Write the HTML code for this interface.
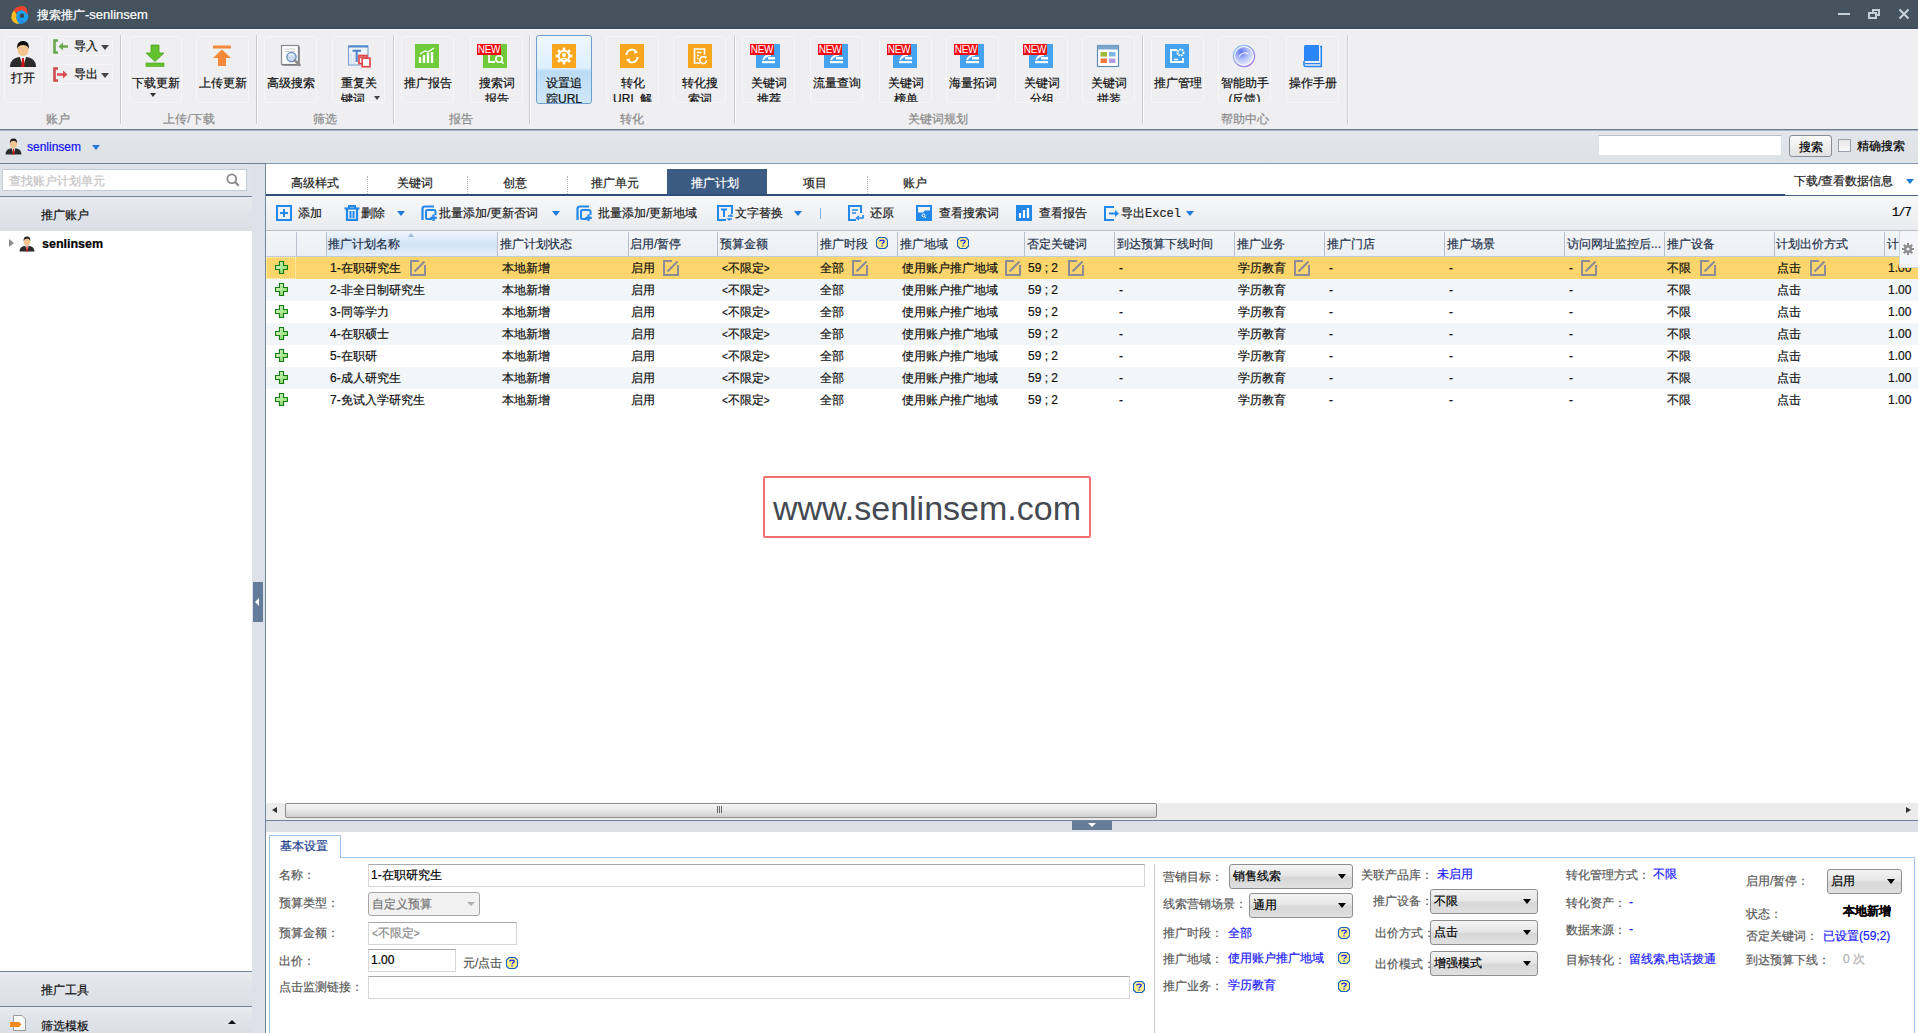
<!DOCTYPE html>
<html><head><meta charset="utf-8">
<style>
*{margin:0;padding:0;box-sizing:border-box}
html,body{width:1918px;height:1033px;overflow:hidden}
body{position:relative;font-family:"Liberation Sans",sans-serif;font-size:12px;color:#000;background:#fff;-webkit-text-stroke-width:0.2px}
.a{position:absolute}
.t{position:absolute;white-space:nowrap;line-height:14px}
/* title */
#title{left:0;top:0;width:1918px;height:29px;background:linear-gradient(#45535f 0,#45535f 27px,#404e5a 27px)}
/* ribbon */
#ribbon{left:0;top:29px;width:1918px;height:100px;background:#efeff1;border-top:1px solid #f5f8fc}
.rb{position:absolute;top:36px;height:67px;width:53px;border:1px solid #f6f6f8;border-radius:3px;text-align:center;overflow:hidden}
.rb .ic{position:absolute;left:14px;top:7px;width:24px;height:24px}
.rb .tx{position:absolute;left:-4px;right:-4px;top:38px;line-height:16px;font-size:12px;color:#111;white-space:normal}
.sep{position:absolute;top:35px;width:2px;height:89px;border-left:1px solid #c9ccd1;border-right:1px solid #fafafa}
.gl{position:absolute;top:112px;height:15px;line-height:15px;color:#8a8a8a;text-align:center;white-space:nowrap}
.new{position:absolute;left:-6px;top:7px;width:24px;height:11px;background:#f20a10;color:#fff;font-size:10px;line-height:11px;text-align:center;font-weight:normal;letter-spacing:-0.3px;overflow:hidden;-webkit-text-stroke-width:0}
/* account bar */
#acct{left:0;top:129px;width:1918px;height:35px;background:linear-gradient(#a9b6c6 0,#a9b6c6 1px,#e3e6ea 1px,#dde2e7 32px,#d8e6f3 33px);border-top:1px solid #6c7d91;border-bottom:1px solid #707f91}
/* left panel */
#lp{left:0;top:164px;width:252px;height:869px;background:#dee3ea}
#split{left:252px;top:164px;width:13px;height:869px;background:#dde2ea}
#vline{left:265px;top:164px;width:1px;height:869px;background:#72869c}
.lhdr{position:absolute;left:0;width:252px;background:linear-gradient(#e7eaef,#d9dee5);}
/* main */
#tabs{left:266px;top:164px;width:1652px;height:30px;background:#fff}
.tab{position:absolute;top:169px;height:25px;width:100px;text-align:center;line-height:29px;color:#222}
.dsep{position:absolute;top:12px;height:18px;width:1px;border-left:1px dotted #b8b8b8}
#toolbar{left:266px;top:196px;width:1652px;height:35px;background:linear-gradient(#f7f8fa,#e9ebee);border-bottom:1px solid #bcc1c8}
.tb{position:absolute;top:9px;height:16px;line-height:16px;white-space:nowrap;color:#222}
.dd{position:absolute;width:0;height:0;border-left:4px solid transparent;border-right:4px solid transparent;border-top:5px solid #1e7ad8}
#ghdr{left:266px;top:231px;width:1652px;height:26px;background:linear-gradient(#f3f5f8,#eceff4);border-bottom:1px solid #c2cad5}
.ghx{position:absolute;top:0;height:25px;line-height:25px;padding-left:3px;color:#2a3e5e;white-space:nowrap;border-left:1px solid #c9d0da}
.row{position:absolute;left:266px;width:1652px;height:22px}
.c{position:absolute;top:0;line-height:22px;white-space:nowrap;color:#111}
.ed{position:absolute;top:3px;width:16px;height:16px}
.plus{position:absolute;left:9px;top:4px;width:13px;height:13px}
.q{position:absolute;width:12px;height:12px}
/* details */
.lbl{position:absolute;color:#5a5a5a;white-space:nowrap;line-height:14px}
.val{position:absolute;color:#1a1aff;white-space:nowrap;line-height:14px}
.inp{position:absolute;background:#fff;border:1px solid #d6d6d6;border-top-color:#a9a9a9}
.sel{position:absolute;border:1px solid #8e8e8e;border-radius:3px;background:linear-gradient(#f4f4f4 0%,#e7e7e7 45%,#d7d7d7 55%,#e0e0e0 100%)}
.sel span{position:absolute;left:3px;top:0;line-height:22px;color:#000}
.sel i{position:absolute;right:6px;top:9px;width:0;height:0;border-left:4px solid transparent;border-right:4px solid transparent;border-top:5px solid #000}

.rb.act{top:35px;height:69px;border:1px solid #6c9dd3;background:linear-gradient(#eef7fe 0%,#ddeffc 48%,#bcdcf5 52%,#cfe7fa 100%)}

.rb.act .tx{top:39px}
.rb.act .ic{top:8px}
</style></head><body>
<!-- TITLE BAR -->
<div id="title" class="a">
  <svg class="a" style="left:10px;top:5px" width="19" height="19" viewBox="0 0 18 18">
    <path d="M6 9.5 C6 6 9 4.5 12 4.8 C15 5.2 17.5 7.5 17.3 11 C17 15 14 17.8 10 17.8 C7.5 17.8 6 16 6 13 Z" fill="#1aa3f5"/>
    <path d="M8.5 12.5 C8.5 14.5 10.5 16 13 15.5" stroke="#2f7fe6" stroke-width="1.5" fill="none"/>
    <circle cx="11.3" cy="10.2" r="2.1" fill="#3a4650"/>
    <path d="M2.5 8.5 C3 3.5 7.5 0.8 11.5 1 C15 1.2 17.3 4 16.3 9.5 C15.3 6.5 12.5 4.6 9.5 5.2 C7 5.8 5.3 7.5 4.6 10 Z" fill="#f7432a"/>
    <path d="M3.8 5.2 C0.8 8.5 0.6 13 2.8 15.6 C4.3 17.3 6.8 18 9 17.8 C6.5 16 5.3 12.5 6.3 9 Z" fill="#fdbe22"/>
  </svg>
  <div class="t" style="left:37px;top:7px;color:#fff;font-size:13px;line-height:15px"><span style="font-size:12px">搜索推广</span>-senlinsem</div>
  <div class="a" style="left:1838px;top:13px;width:12px;height:2px;background:#c6cfd6"></div>
  <div class="a" style="left:1872px;top:9px;width:8px;height:7px;border:2px solid #c6cfd6;border-left-width:2px"></div>
  <div class="a" style="left:1868px;top:12px;width:9px;height:7px;border:2px solid #c6cfd6;background:#45535f"></div>
  <svg class="a" style="left:1898px;top:8px" width="12" height="12" viewBox="0 0 12 12"><path d="M1.5 1.5L10.5 10.5M10.5 1.5L1.5 10.5" stroke="#c6cfd6" stroke-width="2.2"/></svg>
</div>

<div id="ribbon" class="a"></div>
<div class="rb" style="left:4px;width:38px"><div class="a" style="left:4px;top:3px"><svg width="28" height="28" viewBox="0 0 28 28">
<path d="M1 27 C1 20 6 17.5 11 17 L17 17 C22 17.5 27 20 27 27 Z" fill="#2b2b2b"/>
<path d="M11 17 L14 27 L17 17 Z" fill="#fff"/>
<path d="M13 18 L15 18 L15.6 27 L12.4 27 Z" fill="#d4141a"/>
<ellipse cx="14" cy="9.5" rx="5.6" ry="6.8" fill="#f3c48f"/>
<path d="M8.2 9 C7.5 3 10.5 1 14 1 C17.5 1 20.5 3 19.8 9 C19 6 17 5 14 5 C11 5 9 6 8.2 9 Z" fill="#111"/>
</svg></div><div class="tx" style="top:33px;left:0;right:0">打开</div></div>
<div class="rb" style="left:48px;top:36px;width:65px;height:20px"><div class="a" style="left:4px;top:2px"><svg width="16" height="15" viewBox="0 0 16 15"><path d="M5 1.5 H1.5 V13.5 H5" stroke="#6aa84f" stroke-width="2.6" fill="none"/><path d="M15 7.5 H8" stroke="#6aa84f" stroke-width="2.4"/><path d="M10 3.5 L5.5 7.5 L10 11.5 Z" fill="#6aa84f"/></svg></div><div class="t" style="left:25px;top:2px;color:#111">导入</div><div class="dd" style="left:52px;top:8px;border-top-color:#444"></div></div>
<div class="rb" style="left:48px;top:64px;width:65px;height:20px"><div class="a" style="left:4px;top:2px"><svg width="16" height="15" viewBox="0 0 16 15"><path d="M5 1.5 H1.5 V13.5 H5" stroke="#cc4a4a" stroke-width="2.6" fill="none"/><path d="M4 7.5 H11" stroke="#d94a55" stroke-width="2.4"/><path d="M10 3.5 L14.5 7.5 L10 11.5 Z" fill="#d94a55"/></svg></div><div class="t" style="left:25px;top:2px;color:#111">导出</div><div class="dd" style="left:52px;top:8px;border-top-color:#444"></div></div>
<div class="rb" style="left:129px;width:53px"><div class="ic" style="left:13px"><svg width="24" height="24" viewBox="0 0 24 24"><path d="M8 1 H16 V9 H21 L12 17.5 L3 9 H8 Z" fill="#62c22e" stroke="#4fa322" stroke-width="0.8"/><rect x="3" y="19" width="18" height="3.5" fill="#62c22e" stroke="#4fa322" stroke-width="0.6"/></svg></div><div class="tx">下载更新</div></div>
<div class="a" style="left:150px;top:93px;width:0;height:0;border-left:3.5px solid transparent;border-right:3.5px solid transparent;border-top:4px solid #333"></div>
<div class="rb" style="left:196px;width:53px"><div class="ic" style="left:13px"><svg width="24" height="24" viewBox="0 0 24 24"><rect x="3" y="1.5" width="18" height="3" fill="#f7893a"/><path d="M8 22 H16 V14 H21 L12 5.5 L3 14 H8 Z" fill="#f7893a"/></svg></div><div class="tx">上传更新</div></div>
<div class="rb" style="left:264px;width:53px"><div class="ic" style="left:12px"><svg width="26" height="24" viewBox="0 0 26 24"><rect x="4.5" y="1.5" width="17" height="19" fill="#fbfbfb" stroke="#8a8a8a" stroke-width="1.2"/><path d="M5.5 21.2 H22.2 V2.5" stroke="#555" stroke-width="0.8" fill="none"/><path d="M8 5 H18 M8 7.5 H18" stroke="#d0d0d0" stroke-width="1"/><circle cx="14.5" cy="13" r="4.6" fill="#c9dcf2" stroke="#6d8fb8" stroke-width="1.4"/><path d="M11.8 11.5 C12.8 10 15 10 16 11" stroke="#fff" stroke-width="1.1" fill="none"/><path d="M17.8 16.3 L22.5 21" stroke="#8a8a8a" stroke-width="2.6" stroke-linecap="round"/></svg></div><div class="tx">高级搜索</div></div>
<div class="rb" style="left:332px;width:53px"><div class="ic" style="left:12px"><svg width="26" height="24" viewBox="0 0 26 24"><rect x="3.5" y="2" width="19.5" height="19" fill="#eef3fa" stroke="#7aa0cf" stroke-width="1.1"/><rect x="3.5" y="1.5" width="19.5" height="2" fill="#4f87cf"/><path d="M7.5 6.8 H16 M11.7 6.8 V18" stroke="#4a7fc8" stroke-width="2"/><path d="M6 9 V20 M9 9 V20" stroke="#c9d8ee" stroke-width="1"/><rect x="14" y="11.5" width="8" height="8" fill="#fff" stroke="#e04848" stroke-width="1.7"/><rect x="17.2" y="14.2" width="7.8" height="8.5" fill="#fff" stroke="#e04848" stroke-width="1.7"/><rect x="14.8" y="12.2" width="6.4" height="2" fill="#e85a5a"/></svg></div><div class="tx">重复关<br>键词&nbsp;&nbsp;&nbsp;</div></div>
<div class="a" style="left:374px;top:96px;width:0;height:0;border-left:3.5px solid transparent;border-right:3.5px solid transparent;border-top:4px solid #444"></div>
<div class="rb" style="left:401px;width:53px"><div class="ic" style="left:13px"><svg width="24" height="24" viewBox="0 0 24 24"><rect width="24" height="24" fill="#6fcb3a"/><path d="M5 19 V13 M9 19 V11 M13 19 V9 M17 19 V8" stroke="#fff" stroke-width="2.4"/><path d="M5 10 L10 7 L13 8 L19 4" stroke="#fff" stroke-width="1.3" fill="none"/></svg></div><div class="tx">推广报告</div></div>
<div class="rb" style="left:470px;width:53px"><div class="ic" style="left:12px"><svg width="24" height="24" viewBox="0 0 24 24"><rect width="24" height="24" fill="#6fcb3a"/><path d="M6 11 V18 H12" stroke="#fff" stroke-width="1.8" fill="none"/><circle cx="16" cy="15" r="3.2" stroke="#fff" stroke-width="1.6" fill="none"/><path d="M18 17 L20.5 19.5" stroke="#fff" stroke-width="1.6"/></svg></div><div class="new" style="left:6px">NEW</div><div class="tx">搜索词<br>报告</div></div>
<div class="rb act" style="left:536px;width:56px"><div class="ic" style="left:15px"><svg width="24" height="24" viewBox="0 0 24 24"><rect width="24" height="24" fill="#f9a61f"/><g fill="#fff"><rect x="10.7" y="3.6" width="2.6" height="3.5" transform="rotate(0 12 12)"/><rect x="10.7" y="3.6" width="2.6" height="3.5" transform="rotate(45 12 12)"/><rect x="10.7" y="3.6" width="2.6" height="3.5" transform="rotate(90 12 12)"/><rect x="10.7" y="3.6" width="2.6" height="3.5" transform="rotate(135 12 12)"/><rect x="10.7" y="3.6" width="2.6" height="3.5" transform="rotate(180 12 12)"/><rect x="10.7" y="3.6" width="2.6" height="3.5" transform="rotate(225 12 12)"/><rect x="10.7" y="3.6" width="2.6" height="3.5" transform="rotate(270 12 12)"/><rect x="10.7" y="3.6" width="2.6" height="3.5" transform="rotate(315 12 12)"/><circle cx="12" cy="12" r="6.2"/></g><circle cx="12" cy="12" r="4.3" fill="#f9a61f"/><circle cx="12" cy="11" r="1.9" fill="#fff"/><path d="M8.6 15.4 C9.5 13.2 14.5 13.2 15.4 15.4 Z" fill="#fff"/></svg></div><div class="tx">设置追<br>踪URL</div></div>
<div class="rb" style="left:606px;width:53px"><div class="ic" style="left:13px"><svg width="24" height="24" viewBox="0 0 24 24"><rect width="24" height="24" fill="#f9a61f"/><path d="M6.5 11 A5.5 5.5 0 0 1 16.5 8" stroke="#fff" stroke-width="2" fill="none"/><path d="M17.5 13 A5.5 5.5 0 0 1 7.5 16" stroke="#fff" stroke-width="2" fill="none"/><path d="M14.5 5.5 L18 8.5 L14 9.5 Z" fill="#fff"/><path d="M9.5 18.5 L6 15.5 L10 14.5 Z" fill="#fff"/></svg></div><div class="tx">转化<br>URL 解</div></div>
<div class="rb" style="left:673px;width:53px"><div class="ic" style="left:14px"><svg width="24" height="24" viewBox="0 0 24 24"><rect width="24" height="24" fill="#f9a61f"/><path d="M12 19 H6.5 V5 H16.5 V10.5" stroke="#fff" stroke-width="1.6" fill="none"/><path d="M9 8.5 H13.5 M9 11.5 H11 M9 14.5 H10.5" stroke="#fff" stroke-width="1.4"/><path d="M18.6 16.2 A3.4 3.4 0 1 1 17.2 13.4" stroke="#fff" stroke-width="1.6" fill="none"/><path d="M16 12 L19 12.6 L17.6 15 Z" fill="#fff"/></svg></div><div class="tx">转化搜<br>索词</div></div>
<div class="rb" style="left:742px;width:53px"><div class="ic" style="left:13px"><svg width="24" height="24" viewBox="0 0 24 24"><rect width="24" height="24" fill="#45a3ef"/><path d="M7 16 C9 12 12 11 15 11" stroke="#fff" stroke-width="1.8" fill="none"/><rect x="12" y="13" width="7" height="2.5" fill="#fff"/><rect x="6" y="17" width="13" height="2.2" fill="#fff"/></svg></div><div class="new" style="left:7px">NEW</div><div class="tx">关键词<br>推荐</div></div>
<div class="rb" style="left:810px;width:53px"><div class="ic" style="left:13px"><svg width="24" height="24" viewBox="0 0 24 24"><rect width="24" height="24" fill="#45a3ef"/><path d="M7 16 C9 12 12 11 15 11" stroke="#fff" stroke-width="1.8" fill="none"/><rect x="12" y="13" width="7" height="2.5" fill="#fff"/><rect x="6" y="17" width="13" height="2.2" fill="#fff"/></svg></div><div class="new" style="left:7px">NEW</div><div class="tx">流量查询</div></div>
<div class="rb" style="left:879px;width:53px"><div class="ic" style="left:13px"><svg width="24" height="24" viewBox="0 0 24 24"><rect width="24" height="24" fill="#45a3ef"/><path d="M7 16 C9 12 12 11 15 11" stroke="#fff" stroke-width="1.8" fill="none"/><rect x="12" y="13" width="7" height="2.5" fill="#fff"/><rect x="6" y="17" width="13" height="2.2" fill="#fff"/></svg></div><div class="new" style="left:7px">NEW</div><div class="tx">关键词<br>榜单</div></div>
<div class="rb" style="left:946px;width:53px"><div class="ic" style="left:13px"><svg width="24" height="24" viewBox="0 0 24 24"><rect width="24" height="24" fill="#45a3ef"/><path d="M7 16 C9 12 12 11 15 11" stroke="#fff" stroke-width="1.8" fill="none"/><rect x="12" y="13" width="7" height="2.5" fill="#fff"/><rect x="6" y="17" width="13" height="2.2" fill="#fff"/></svg></div><div class="new" style="left:7px">NEW</div><div class="tx">海量拓词</div></div>
<div class="rb" style="left:1015px;width:53px"><div class="ic" style="left:13px"><svg width="24" height="24" viewBox="0 0 24 24"><rect width="24" height="24" fill="#45a3ef"/><path d="M7 16 C9 12 12 11 15 11" stroke="#fff" stroke-width="1.8" fill="none"/><rect x="12" y="13" width="7" height="2.5" fill="#fff"/><rect x="6" y="17" width="13" height="2.2" fill="#fff"/></svg></div><div class="new" style="left:7px">NEW</div><div class="tx">关键词<br>分组</div></div>
<div class="rb" style="left:1082px;width:53px"><div class="ic" style="left:13px"><svg width="24" height="24" viewBox="0 0 24 24"><rect x="1.5" y="1.5" width="21" height="21" fill="#fff" stroke="#5f8db0" stroke-width="1.2"/><rect x="1.5" y="1.5" width="21" height="4" fill="#7aa7cf"/><rect x="4.5" y="8" width="6.5" height="4.5" fill="#9ebb37"/><rect x="13" y="8" width="6.5" height="4.5" fill="#7fb6e6"/><rect x="4.5" y="14.5" width="6.5" height="4.5" fill="#f0783a"/><rect x="13" y="14.5" width="6.5" height="4.5" fill="#b49be0"/></svg></div><div class="tx">关键词<br>拼装</div></div>
<div class="rb" style="left:1151px;width:53px"><div class="ic" style="left:13px"><svg width="24" height="24" viewBox="0 0 24 24"><rect width="24" height="24" fill="#45a3ef"/><path d="M12 6 H6 V18 H18 V14" stroke="#fff" stroke-width="1.8" fill="none"/><circle cx="15.5" cy="8.5" r="3" stroke="#fff" stroke-width="2" fill="none" stroke-dasharray="1.6 0.9"/><path d="M9 15.5 H13" stroke="#fff" stroke-width="1.3"/></svg></div><div class="tx">推广管理</div></div>
<div class="rb" style="left:1218px;width:53px"><div class="ic" style="left:13px"><svg width="24" height="24" viewBox="0 0 24 24"><defs><radialGradient id="aig" cx="0.35" cy="0.3" r="0.75"><stop offset="0" stop-color="#5a6ef0"/><stop offset="0.45" stop-color="#a9b8f6"/><stop offset="1" stop-color="#e9eefc"/></radialGradient><linearGradient id="air" x1="0" y1="0" x2="1" y2="1"><stop offset="0" stop-color="#8fd0f5"/><stop offset="1" stop-color="#a46cf0"/></linearGradient></defs><circle cx="12" cy="12" r="10.6" fill="#fff" stroke="url(#air)" stroke-width="1.3"/><circle cx="12" cy="12" r="9" fill="url(#aig)"/><path d="M7 12.5 C9 9 13 8 16.5 10" stroke="#fff" stroke-width="1.2" fill="none" opacity="0.8"/></svg></div><div class="tx">智能助手<br>(反馈)</div></div>
<div class="rb" style="left:1286px;width:53px"><div class="ic" style="left:13px"><svg width="24" height="24" viewBox="0 0 24 24"><path d="M4 2.5 Q4 1 5.5 1 H19 V17 H4 Z" fill="#2a85f7"/><path d="M20 2.5 H21.3 V22.5 H5.5 Q4 22.5 4 21 V17" stroke="#2a85f7" stroke-width="1.6" fill="none"/><path d="M5 19.6 H20" stroke="#2a85f7" stroke-width="1.4"/></svg></div><div class="tx">操作手册</div></div>
<div class="sep" style="left:120px"></div>
<div class="sep" style="left:256px"></div>
<div class="sep" style="left:393px"></div>
<div class="sep" style="left:529px"></div>
<div class="sep" style="left:734px"></div>
<div class="sep" style="left:1142px"></div>
<div class="sep" style="left:1347px"></div>
<div class="gl" style="left:8px;width:100px">账户</div>
<div class="gl" style="left:139px;width:100px">上传/下载</div>
<div class="gl" style="left:275px;width:100px">筛选</div>
<div class="gl" style="left:411px;width:100px">报告</div>
<div class="gl" style="left:582px;width:100px">转化</div>
<div class="gl" style="left:888px;width:100px">关键词规划</div>
<div class="gl" style="left:1195px;width:100px">帮助中心</div>
<div id="acct" class="a"></div>
<div class="a" style="left:5px;top:138px"><svg width="17" height="17" viewBox="0 0 28 28">
<path d="M1 27 C1 20 6 17.5 11 17 L17 17 C22 17.5 27 20 27 27 Z" fill="#2b2b2b"/>
<path d="M11 17 L14 27 L17 17 Z" fill="#fff"/>
<path d="M13 18 L15 18 L15.6 27 L12.4 27 Z" fill="#d4141a"/>
<ellipse cx="14" cy="9.5" rx="5.8" ry="7" fill="#f3c48f"/>
<path d="M8.2 9 C7.5 3 10.5 1 14 1 C17.5 1 20.5 3 19.8 9 C19 6 17 5 14 5 C11 5 9 6 8.2 9 Z" fill="#222"/>
</svg></div>
<div class="t" style="left:27px;top:140px;color:#1010ff;font-size:12px">senlinsem</div>
<div class="dd" style="left:92px;top:145px;border-left-width:4px;border-right-width:4px;border-top-width:5px"></div>
<div class="a" style="left:1598px;top:135px;width:184px;height:21px;background:#fff;border:1px solid #dfe3e8;border-top-color:#b9bfc7"></div>
<div class="a" style="left:1789px;top:135px;width:43px;height:22px;border:1px solid #8a8f96;border-radius:3px;background:linear-gradient(#fbfbfb,#e2e2e2);text-align:center;line-height:22px;color:#000">搜索</div>
<div class="a" style="left:1838px;top:139px;width:13px;height:13px;border:1px solid #9aa0a8;background:linear-gradient(#e6e6e6,#fafafa)"></div>
<div class="t" style="left:1857px;top:139px;color:#000">精确搜索</div>
<div id="lp" class="a"></div><div id="split" class="a"></div><div id="vline" class="a"></div>
<div class="a" style="left:2px;top:169px;width:245px;height:22px;background:#fff;border:1px solid #c7ccd3"></div>
<div class="t" style="left:9px;top:174px;color:#c4c4c4">查找账户计划单元</div>
<svg class="a" style="left:226px;top:173px" width="14" height="14" viewBox="0 0 14 14"><circle cx="5.8" cy="5.8" r="4.4" stroke="#8a8a8a" stroke-width="1.8" fill="none"/><path d="M9 9 L12.8 12.8" stroke="#8a8a8a" stroke-width="2.2"/></svg>
<div class="a" style="left:0;top:196px;width:252px;height:1px;background:#71849a"></div>
<div class="lhdr" style="top:197px;height:34px"></div>
<div class="t" style="left:41px;top:208px;color:#111">推广账户</div>
<div class="a" style="left:0;top:231px;width:252px;height:740px;background:#fff"></div>
<div class="a" style="left:9px;top:239px;width:0;height:0;border-top:4.5px solid transparent;border-bottom:4.5px solid transparent;border-left:5px solid #8c8c8c"></div>
<div class="a" style="left:19px;top:236px"><svg width="16" height="16" viewBox="0 0 28 28">
<path d="M1 27 C1 20 6 17.5 11 17 L17 17 C22 17.5 27 20 27 27 Z" fill="#2b2b2b"/>
<path d="M11 17 L14 27 L17 17 Z" fill="#fff"/>
<path d="M13 18 L15 18 L15.6 27 L12.4 27 Z" fill="#d4141a"/>
<ellipse cx="14" cy="9.5" rx="5.8" ry="7" fill="#f3c48f"/>
<path d="M8.2 9 C7.5 3 10.5 1 14 1 C17.5 1 20.5 3 19.8 9 C19 6 17 5 14 5 C11 5 9 6 8.2 9 Z" fill="#222"/>
</svg></div>
<div class="t" style="left:42px;top:237px;font-weight:bold;font-size:12.5px;color:#000">senlinsem</div>
<div class="a" style="left:0;top:971px;width:252px;height:1px;background:#71849a"></div>
<div class="lhdr" style="top:972px;height:34px"></div>
<div class="t" style="left:41px;top:983px;color:#111">推广工具</div>
<div class="a" style="left:0;top:1006px;width:252px;height:1px;background:#71849a"></div>
<div class="lhdr" style="top:1007px;height:26px"></div>
<svg class="a" style="left:9px;top:1015px" width="18" height="16" viewBox="0 0 18 16"><path d="M4.5 0.5 H13 L16.5 4 V15.5 H4.5 Z" fill="#fafafa" stroke="#9a9a9a"/><path d="M1 7 H10 L12.5 9.5 L10 12 H1 Z" fill="#f28a1f"/></svg>
<div class="t" style="left:41px;top:1019px;color:#111">筛选模板</div>
<div class="a" style="left:228px;top:1020px;width:0;height:0;border-left:4px solid transparent;border-right:4px solid transparent;border-bottom:4px solid #111"></div>
<div class="a" style="left:253px;top:582px;width:10px;height:40px;background:#647c99"></div>
<div class="a" style="left:255px;top:598px;width:0;height:0;border-top:4px solid transparent;border-bottom:4px solid transparent;border-right:4px solid #fff"></div>
<div id="tabs" class="a"></div>
<div class="a" style="left:266px;top:163px;width:1652px;height:1px;background:#8595a8"></div>
<div class="tab" style="left:265px">高级样式</div>
<div class="tab" style="left:365px">关键词</div>
<div class="tab" style="left:465px">创意</div>
<div class="tab" style="left:565px">推广单元</div>
<div class="tab" style="left:667px;background:#3c5b82;color:#fff;padding-right:4px">推广计划</div>
<div class="tab" style="left:765px">项目</div>
<div class="tab" style="left:865px">账户</div>
<div class="dsep" style="left:367px;top:176px"></div>
<div class="dsep" style="left:467px;top:176px"></div>
<div class="dsep" style="left:567px;top:176px"></div>
<div class="dsep" style="left:867px;top:176px"></div>
<div class="t" style="left:1794px;top:174px;color:#222">下载/查看数据信息</div>
<div class="dd" style="left:1906px;top:179px"></div>
<div class="a" style="left:266px;top:194px;width:1519px;height:2px;background:#2f4d76"></div>
<div class="a" style="left:1785px;top:195px;width:133px;height:1px;background:#4a6488"></div>
<div id="toolbar" class="a"></div>
<div class="a" style="left:276px;top:205px"><svg width="16" height="16" viewBox="0 0 16 16"><rect x="1" y="1" width="14" height="14" fill="none" stroke="#2288ea" stroke-width="2"/><path d="M8 4 V12 M4 8 H12" stroke="#2288ea" stroke-width="2"/></svg></div>
<div class="t" style="left:298px;top:206px;color:#222">添加</div>
<div class="a" style="left:344px;top:205px"><svg width="16" height="16" viewBox="0 0 16 16"><path d="M0.5 3.5 H15.5" stroke="#2288ea" stroke-width="2.2"/><path d="M5 3 V1 H11 V3" stroke="#2288ea" stroke-width="2" fill="none"/><path d="M3 4 V14.8 H13 V4" stroke="#2288ea" stroke-width="2.2" fill="none"/><path d="M6.5 6 V13 M9.5 6 V13" stroke="#2288ea" stroke-width="2"/></svg></div>
<div class="t" style="left:361px;top:206px;color:#222">删除</div>
<div class="dd" style="left:397px;top:211px"></div>
<div class="a" style="left:421px;top:205px"><svg width="16" height="16" viewBox="0 0 16 16"><path d="M1.5 15 V4 Q1.5 1.5 4 1.5 H13" stroke="#2288ea" stroke-width="2.2" fill="none"/><path d="M11 14 H6.5 Q5 14 5 12.5 V6.5 Q5 5 6.5 5 H13 Q14.5 5 14.5 6.5 V10" stroke="#2288ea" stroke-width="2" fill="none"/><path d="M12.5 9.5 V16 M9.3 12.8 H15.8" stroke="#2288ea" stroke-width="2.3"/></svg></div>
<div class="t" style="left:439px;top:206px;color:#222">批量添加/更新否词</div>
<div class="dd" style="left:552px;top:211px"></div>
<div class="a" style="left:576px;top:205px"><svg width="16" height="16" viewBox="0 0 16 16"><path d="M1.5 15 V4 Q1.5 1.5 4 1.5 H13" stroke="#2288ea" stroke-width="2.2" fill="none"/><path d="M11 14 H6.5 Q5 14 5 12.5 V6.5 Q5 5 6.5 5 H13 Q14.5 5 14.5 6.5 V10" stroke="#2288ea" stroke-width="2" fill="none"/><path d="M12.5 9.5 V16 M9.3 12.8 H15.8" stroke="#2288ea" stroke-width="2.3"/></svg></div>
<div class="t" style="left:598px;top:206px;color:#222">批量添加/更新地域</div>
<div class="a" style="left:717px;top:205px"><svg width="16" height="16" viewBox="0 0 16 16"><path d="M9 15 H1 V1 H15 V9" stroke="#2288ea" stroke-width="2" fill="none"/><path d="M4 4.5 H10 M7 4.5 V12" stroke="#2288ea" stroke-width="2"/><path d="M11 11 H15 L13.5 9.5 M15 14 H11 L12.5 15.5" stroke="#2288ea" stroke-width="1.3" fill="none"/></svg></div>
<div class="t" style="left:735px;top:206px;color:#222">文字替换</div>
<div class="dd" style="left:794px;top:211px"></div>
<div class="a" style="left:848px;top:205px"><svg width="16" height="16" viewBox="0 0 16 16"><path d="M8 15 H1 V1 H13 V8" stroke="#2288ea" stroke-width="2" fill="none"/><path d="M4 5 H10 M4 8 H8" stroke="#2288ea" stroke-width="1.6"/><path d="M15 10 V13 H9" stroke="#2288ea" stroke-width="1.6" fill="none"/><path d="M11 11 L8.5 13 L11 15" stroke="#2288ea" stroke-width="1.4" fill="none"/></svg></div>
<div class="t" style="left:870px;top:206px;color:#222">还原</div>
<div class="a" style="left:916px;top:205px"><svg width="16" height="16" viewBox="0 0 16 16"><rect x="1" y="1" width="14" height="14" fill="none" stroke="#2288ea" stroke-width="2"/><path d="M2 7.5 L7 7.5 L9 5.5 H14 V14 H2 Z" fill="#2288ea"/><circle cx="7.5" cy="10.5" r="1.5" fill="none" stroke="#fff" stroke-width="1"/><path d="M8.6 11.6 L10 13" stroke="#fff" stroke-width="1"/></svg></div>
<div class="t" style="left:939px;top:206px;color:#222">查看搜索词</div>
<div class="a" style="left:1016px;top:205px"><svg width="16" height="16" viewBox="0 0 16 16"><rect width="16" height="16" fill="#2288ea"/><path d="M4 13 V8 M8 13 V5 M12 13 V3" stroke="#fff" stroke-width="2.2"/></svg></div>
<div class="t" style="left:1039px;top:206px;color:#222">查看报告</div>
<div class="a" style="left:1104px;top:205px"><svg width="16" height="16" viewBox="0 0 16 16"><path d="M10 2 H1 V15 H10" stroke="#2288ea" stroke-width="2" fill="none"/><path d="M5 8.5 H13" stroke="#2288ea" stroke-width="2"/><path d="M11 5 L15 8.5 L11 12 Z" fill="#2288ea"/></svg></div>
<div class="t" style="left:1121px;top:206px;color:#222">导出<span style="font-family:&quot;Liberation Mono&quot;,monospace;font-size:12px">Excel</span></div>
<div class="dd" style="left:1186px;top:211px"></div>
<div class="a" style="left:820px;top:208px;width:1px;height:11px;background:#7fb0e6"></div>
<div class="t" style="left:1892px;top:206px;font-family:&quot;Liberation Mono&quot;,monospace;font-size:12px;letter-spacing:-1px;color:#000">1/7</div>
<div id="ghdr" class="a"></div>
<div class="a" style="left:327px;top:232px;width:170px;height:24px;background:linear-gradient(#eef4fc,#d3e2f6 50%,#e6eefa)"></div>
<div class="a" style="left:296px;top:232px;width:1px;height:24px;background:#b9c0cc"></div>
<div class="a" style="left:326px;top:232px;width:1px;height:24px;background:#b9c0cc"></div>
<div class="a" style="left:497px;top:232px;width:1px;height:24px;background:#b9c0cc"></div>
<div class="a" style="left:628px;top:232px;width:1px;height:24px;background:#b9c0cc"></div>
<div class="a" style="left:717px;top:232px;width:1px;height:24px;background:#b9c0cc"></div>
<div class="a" style="left:817px;top:232px;width:1px;height:24px;background:#b9c0cc"></div>
<div class="a" style="left:897px;top:232px;width:1px;height:24px;background:#b9c0cc"></div>
<div class="a" style="left:1024px;top:232px;width:1px;height:24px;background:#b9c0cc"></div>
<div class="a" style="left:1114px;top:232px;width:1px;height:24px;background:#b9c0cc"></div>
<div class="a" style="left:1234px;top:232px;width:1px;height:24px;background:#b9c0cc"></div>
<div class="a" style="left:1324px;top:232px;width:1px;height:24px;background:#b9c0cc"></div>
<div class="a" style="left:1444px;top:232px;width:1px;height:24px;background:#b9c0cc"></div>
<div class="a" style="left:1564px;top:232px;width:1px;height:24px;background:#b9c0cc"></div>
<div class="a" style="left:1664px;top:232px;width:1px;height:24px;background:#b9c0cc"></div>
<div class="a" style="left:1774px;top:232px;width:1px;height:24px;background:#b9c0cc"></div>
<div class="a" style="left:1884px;top:232px;width:1px;height:24px;background:#b9c0cc"></div>
<div class="t" style="left:328px;top:237px;color:#25324a">推广计划名称</div>
<div class="t" style="left:500px;top:237px;color:#25324a">推广计划状态</div>
<div class="t" style="left:630px;top:237px;color:#25324a">启用/暂停</div>
<div class="t" style="left:720px;top:237px;color:#25324a">预算金额</div>
<div class="t" style="left:820px;top:237px;color:#25324a">推广时段</div>
<div class="t" style="left:900px;top:237px;color:#25324a">推广地域</div>
<div class="t" style="left:1027px;top:237px;color:#25324a">否定关键词</div>
<div class="t" style="left:1117px;top:237px;color:#25324a">到达预算下线时间</div>
<div class="t" style="left:1237px;top:237px;color:#25324a">推广业务</div>
<div class="t" style="left:1327px;top:237px;color:#25324a">推广门店</div>
<div class="t" style="left:1447px;top:237px;color:#25324a">推广场景</div>
<div class="t" style="left:1567px;top:237px;color:#25324a">访问网址监控后...</div>
<div class="t" style="left:1667px;top:237px;color:#25324a">推广设备</div>
<div class="t" style="left:1776px;top:237px;color:#25324a">计划出价方式</div>
<div class="t" style="left:1887px;top:237px;color:#25324a">计</div>
<div class="a" style="left:408px;top:233px;width:0;height:0;border-left:3px solid transparent;border-right:3px solid transparent;border-bottom:4px solid #a9bfdc"></div>
<div class="a" style="left:876px;top:237px"><svg width="12" height="12" viewBox="0 0 12 12"><path d="M3 0.5 H9 L11.5 3 V9 L9 11.5 H3 L0.5 9 V3 Z" fill="#f7f08a" stroke="#1560c0" stroke-width="1.1"/><path d="M3.8 4.4 C3.8 2.6 8.2 2.6 8.2 4.4 C8.2 5.6 6 5.8 6 7.3" stroke="#1a1aff" stroke-width="1.2" fill="none"/><rect x="5.4" y="8.3" width="1.3" height="1.3" fill="#1a1aff"/></svg></div>
<div class="a" style="left:957px;top:237px"><svg width="12" height="12" viewBox="0 0 12 12"><path d="M3 0.5 H9 L11.5 3 V9 L9 11.5 H3 L0.5 9 V3 Z" fill="#f7f08a" stroke="#1560c0" stroke-width="1.1"/><path d="M3.8 4.4 C3.8 2.6 8.2 2.6 8.2 4.4 C8.2 5.6 6 5.8 6 7.3" stroke="#1a1aff" stroke-width="1.2" fill="none"/><rect x="5.4" y="8.3" width="1.3" height="1.3" fill="#1a1aff"/></svg></div>
<div class="a" style="left:1899px;top:231px;width:19px;height:37px;background:#f3f5f8;border-left:1px solid #d0d6de;border-bottom:1px solid #d0d6de"></div>
<svg class="a" style="left:1902px;top:243px" width="12" height="12" viewBox="0 0 12 12"><g fill="#8f8f8f"><circle cx="6" cy="6" r="4"/><rect x="5" y="0" width="2" height="12"/><rect x="0" y="5" width="12" height="2"/><rect x="5" y="0" width="2" height="12" transform="rotate(45 6 6)"/><rect x="5" y="0" width="2" height="12" transform="rotate(-45 6 6)"/></g><circle cx="6" cy="6" r="1.6" fill="#f3f5f8"/></svg>
<div class="row" style="top:257px;background:#fcd66c">
<div class="plus"><svg width="13" height="13" viewBox="0 0 13 13"><defs><linearGradient id="pg" x1="0" y1="0" x2="1" y2="1"><stop offset="0" stop-color="#e6fbd8"/><stop offset="1" stop-color="#7fd65a"/></linearGradient></defs><path d="M4.5 0.5 H8.5 V4.5 H12.5 V8.5 H8.5 V12.5 H4.5 V8.5 H0.5 V4.5 H4.5 Z" fill="url(#pg)" stroke="#137c13" stroke-width="1.2"/></svg></div>
<div class="c" style="left:64px">1-在职研究生</div>
<div class="c" style="left:236px">本地新增</div>
<div class="c" style="left:365px">启用</div>
<div class="c" style="left:456px"><span style="font-size:10px">&lt;</span>不限定<span style="font-size:10px">&gt;</span></div>
<div class="c" style="left:554px">全部</div>
<div class="c" style="left:636px">使用账户推广地域</div>
<div class="c" style="left:762px">59 ; 2</div>
<div class="c" style="left:853px">-</div>
<div class="c" style="left:972px">学历教育</div>
<div class="c" style="left:1063px">-</div>
<div class="c" style="left:1183px">-</div>
<div class="c" style="left:1303px">-</div>
<div class="c" style="left:1401px">不限</div>
<div class="c" style="left:1511px">点击</div>
<div class="c" style="left:1622px">1.00</div>
<div class="ed" style="left:144px"><svg width="16" height="16" viewBox="0 0 16 16"><path d="M9 1 H1 V15 H15 V5" stroke="#8c8c98" stroke-width="2" fill="none"/><path d="M4.5 11.5 L14.5 1.5" stroke="#8c8c98" stroke-width="2.2"/></svg></div>
<div class="ed" style="left:397px"><svg width="16" height="16" viewBox="0 0 16 16"><path d="M9 1 H1 V15 H15 V5" stroke="#8c8c98" stroke-width="2" fill="none"/><path d="M4.5 11.5 L14.5 1.5" stroke="#8c8c98" stroke-width="2.2"/></svg></div>
<div class="ed" style="left:586px"><svg width="16" height="16" viewBox="0 0 16 16"><path d="M9 1 H1 V15 H15 V5" stroke="#8c8c98" stroke-width="2" fill="none"/><path d="M4.5 11.5 L14.5 1.5" stroke="#8c8c98" stroke-width="2.2"/></svg></div>
<div class="ed" style="left:739px"><svg width="16" height="16" viewBox="0 0 16 16"><path d="M9 1 H1 V15 H15 V5" stroke="#8c8c98" stroke-width="2" fill="none"/><path d="M4.5 11.5 L14.5 1.5" stroke="#8c8c98" stroke-width="2.2"/></svg></div>
<div class="ed" style="left:802px"><svg width="16" height="16" viewBox="0 0 16 16"><path d="M9 1 H1 V15 H15 V5" stroke="#8c8c98" stroke-width="2" fill="none"/><path d="M4.5 11.5 L14.5 1.5" stroke="#8c8c98" stroke-width="2.2"/></svg></div>
<div class="ed" style="left:1028px"><svg width="16" height="16" viewBox="0 0 16 16"><path d="M9 1 H1 V15 H15 V5" stroke="#8c8c98" stroke-width="2" fill="none"/><path d="M4.5 11.5 L14.5 1.5" stroke="#8c8c98" stroke-width="2.2"/></svg></div>
<div class="ed" style="left:1315px"><svg width="16" height="16" viewBox="0 0 16 16"><path d="M9 1 H1 V15 H15 V5" stroke="#8c8c98" stroke-width="2" fill="none"/><path d="M4.5 11.5 L14.5 1.5" stroke="#8c8c98" stroke-width="2.2"/></svg></div>
<div class="ed" style="left:1434px"><svg width="16" height="16" viewBox="0 0 16 16"><path d="M9 1 H1 V15 H15 V5" stroke="#8c8c98" stroke-width="2" fill="none"/><path d="M4.5 11.5 L14.5 1.5" stroke="#8c8c98" stroke-width="2.2"/></svg></div>
<div class="ed" style="left:1544px"><svg width="16" height="16" viewBox="0 0 16 16"><path d="M9 1 H1 V15 H15 V5" stroke="#8c8c98" stroke-width="2" fill="none"/><path d="M4.5 11.5 L14.5 1.5" stroke="#8c8c98" stroke-width="2.2"/></svg></div>
</div>
<div class="row" style="top:279px;background:#f3f6f9">
<div class="plus"><svg width="13" height="13" viewBox="0 0 13 13"><defs><linearGradient id="pg" x1="0" y1="0" x2="1" y2="1"><stop offset="0" stop-color="#e6fbd8"/><stop offset="1" stop-color="#7fd65a"/></linearGradient></defs><path d="M4.5 0.5 H8.5 V4.5 H12.5 V8.5 H8.5 V12.5 H4.5 V8.5 H0.5 V4.5 H4.5 Z" fill="url(#pg)" stroke="#137c13" stroke-width="1.2"/></svg></div>
<div class="c" style="left:64px">2-非全日制研究生</div>
<div class="c" style="left:236px">本地新增</div>
<div class="c" style="left:365px">启用</div>
<div class="c" style="left:456px"><span style="font-size:10px">&lt;</span>不限定<span style="font-size:10px">&gt;</span></div>
<div class="c" style="left:554px">全部</div>
<div class="c" style="left:636px">使用账户推广地域</div>
<div class="c" style="left:762px">59 ; 2</div>
<div class="c" style="left:853px">-</div>
<div class="c" style="left:972px">学历教育</div>
<div class="c" style="left:1063px">-</div>
<div class="c" style="left:1183px">-</div>
<div class="c" style="left:1303px">-</div>
<div class="c" style="left:1401px">不限</div>
<div class="c" style="left:1511px">点击</div>
<div class="c" style="left:1622px">1.00</div>
</div>
<div class="row" style="top:301px;background:#fff">
<div class="plus"><svg width="13" height="13" viewBox="0 0 13 13"><defs><linearGradient id="pg" x1="0" y1="0" x2="1" y2="1"><stop offset="0" stop-color="#e6fbd8"/><stop offset="1" stop-color="#7fd65a"/></linearGradient></defs><path d="M4.5 0.5 H8.5 V4.5 H12.5 V8.5 H8.5 V12.5 H4.5 V8.5 H0.5 V4.5 H4.5 Z" fill="url(#pg)" stroke="#137c13" stroke-width="1.2"/></svg></div>
<div class="c" style="left:64px">3-同等学力</div>
<div class="c" style="left:236px">本地新增</div>
<div class="c" style="left:365px">启用</div>
<div class="c" style="left:456px"><span style="font-size:10px">&lt;</span>不限定<span style="font-size:10px">&gt;</span></div>
<div class="c" style="left:554px">全部</div>
<div class="c" style="left:636px">使用账户推广地域</div>
<div class="c" style="left:762px">59 ; 2</div>
<div class="c" style="left:853px">-</div>
<div class="c" style="left:972px">学历教育</div>
<div class="c" style="left:1063px">-</div>
<div class="c" style="left:1183px">-</div>
<div class="c" style="left:1303px">-</div>
<div class="c" style="left:1401px">不限</div>
<div class="c" style="left:1511px">点击</div>
<div class="c" style="left:1622px">1.00</div>
</div>
<div class="row" style="top:323px;background:#f3f6f9">
<div class="plus"><svg width="13" height="13" viewBox="0 0 13 13"><defs><linearGradient id="pg" x1="0" y1="0" x2="1" y2="1"><stop offset="0" stop-color="#e6fbd8"/><stop offset="1" stop-color="#7fd65a"/></linearGradient></defs><path d="M4.5 0.5 H8.5 V4.5 H12.5 V8.5 H8.5 V12.5 H4.5 V8.5 H0.5 V4.5 H4.5 Z" fill="url(#pg)" stroke="#137c13" stroke-width="1.2"/></svg></div>
<div class="c" style="left:64px">4-在职硕士</div>
<div class="c" style="left:236px">本地新增</div>
<div class="c" style="left:365px">启用</div>
<div class="c" style="left:456px"><span style="font-size:10px">&lt;</span>不限定<span style="font-size:10px">&gt;</span></div>
<div class="c" style="left:554px">全部</div>
<div class="c" style="left:636px">使用账户推广地域</div>
<div class="c" style="left:762px">59 ; 2</div>
<div class="c" style="left:853px">-</div>
<div class="c" style="left:972px">学历教育</div>
<div class="c" style="left:1063px">-</div>
<div class="c" style="left:1183px">-</div>
<div class="c" style="left:1303px">-</div>
<div class="c" style="left:1401px">不限</div>
<div class="c" style="left:1511px">点击</div>
<div class="c" style="left:1622px">1.00</div>
</div>
<div class="row" style="top:345px;background:#fff">
<div class="plus"><svg width="13" height="13" viewBox="0 0 13 13"><defs><linearGradient id="pg" x1="0" y1="0" x2="1" y2="1"><stop offset="0" stop-color="#e6fbd8"/><stop offset="1" stop-color="#7fd65a"/></linearGradient></defs><path d="M4.5 0.5 H8.5 V4.5 H12.5 V8.5 H8.5 V12.5 H4.5 V8.5 H0.5 V4.5 H4.5 Z" fill="url(#pg)" stroke="#137c13" stroke-width="1.2"/></svg></div>
<div class="c" style="left:64px">5-在职研</div>
<div class="c" style="left:236px">本地新增</div>
<div class="c" style="left:365px">启用</div>
<div class="c" style="left:456px"><span style="font-size:10px">&lt;</span>不限定<span style="font-size:10px">&gt;</span></div>
<div class="c" style="left:554px">全部</div>
<div class="c" style="left:636px">使用账户推广地域</div>
<div class="c" style="left:762px">59 ; 2</div>
<div class="c" style="left:853px">-</div>
<div class="c" style="left:972px">学历教育</div>
<div class="c" style="left:1063px">-</div>
<div class="c" style="left:1183px">-</div>
<div class="c" style="left:1303px">-</div>
<div class="c" style="left:1401px">不限</div>
<div class="c" style="left:1511px">点击</div>
<div class="c" style="left:1622px">1.00</div>
</div>
<div class="row" style="top:367px;background:#f3f6f9">
<div class="plus"><svg width="13" height="13" viewBox="0 0 13 13"><defs><linearGradient id="pg" x1="0" y1="0" x2="1" y2="1"><stop offset="0" stop-color="#e6fbd8"/><stop offset="1" stop-color="#7fd65a"/></linearGradient></defs><path d="M4.5 0.5 H8.5 V4.5 H12.5 V8.5 H8.5 V12.5 H4.5 V8.5 H0.5 V4.5 H4.5 Z" fill="url(#pg)" stroke="#137c13" stroke-width="1.2"/></svg></div>
<div class="c" style="left:64px">6-成人研究生</div>
<div class="c" style="left:236px">本地新增</div>
<div class="c" style="left:365px">启用</div>
<div class="c" style="left:456px"><span style="font-size:10px">&lt;</span>不限定<span style="font-size:10px">&gt;</span></div>
<div class="c" style="left:554px">全部</div>
<div class="c" style="left:636px">使用账户推广地域</div>
<div class="c" style="left:762px">59 ; 2</div>
<div class="c" style="left:853px">-</div>
<div class="c" style="left:972px">学历教育</div>
<div class="c" style="left:1063px">-</div>
<div class="c" style="left:1183px">-</div>
<div class="c" style="left:1303px">-</div>
<div class="c" style="left:1401px">不限</div>
<div class="c" style="left:1511px">点击</div>
<div class="c" style="left:1622px">1.00</div>
</div>
<div class="row" style="top:389px;background:#fff">
<div class="plus"><svg width="13" height="13" viewBox="0 0 13 13"><defs><linearGradient id="pg" x1="0" y1="0" x2="1" y2="1"><stop offset="0" stop-color="#e6fbd8"/><stop offset="1" stop-color="#7fd65a"/></linearGradient></defs><path d="M4.5 0.5 H8.5 V4.5 H12.5 V8.5 H8.5 V12.5 H4.5 V8.5 H0.5 V4.5 H4.5 Z" fill="url(#pg)" stroke="#137c13" stroke-width="1.2"/></svg></div>
<div class="c" style="left:64px">7-免试入学研究生</div>
<div class="c" style="left:236px">本地新增</div>
<div class="c" style="left:365px">启用</div>
<div class="c" style="left:456px"><span style="font-size:10px">&lt;</span>不限定<span style="font-size:10px">&gt;</span></div>
<div class="c" style="left:554px">全部</div>
<div class="c" style="left:636px">使用账户推广地域</div>
<div class="c" style="left:762px">59 ; 2</div>
<div class="c" style="left:853px">-</div>
<div class="c" style="left:972px">学历教育</div>
<div class="c" style="left:1063px">-</div>
<div class="c" style="left:1183px">-</div>
<div class="c" style="left:1303px">-</div>
<div class="c" style="left:1401px">不限</div>
<div class="c" style="left:1511px">点击</div>
<div class="c" style="left:1622px">1.00</div>
</div>
<div class="a" style="left:266px;top:257px;width:30px;height:22px;border:1px dotted #fff8c8"></div>
<div class="a" style="left:1899px;top:257px;width:19px;height:11px;background:#f3f5f8;border-left:1px solid #d0d6de;border-bottom:1px solid #d0d6de"></div>
<div class="a" style="left:763px;top:476px;width:328px;height:62px;border:2px solid #f26f70;border-radius:2px"></div>
<div class="t" style="left:773px;top:488px;font-size:34px;line-height:40px;color:#454a52;-webkit-text-stroke-width:0">www.senlinsem.com</div>
<div class="a" style="left:266px;top:803px;width:1652px;height:17px;background:#ececec"></div>
<div class="a" style="left:272px;top:807px;width:0;height:0;border-top:3.5px solid transparent;border-bottom:3.5px solid transparent;border-right:5px solid #333"></div>
<div class="a" style="left:1906px;top:807px;width:0;height:0;border-top:3.5px solid transparent;border-bottom:3.5px solid transparent;border-left:5px solid #333"></div>
<div class="a" style="left:285px;top:803px;width:872px;height:15px;border:1px solid #8d8d8d;border-radius:2px;background:linear-gradient(#f6f6f6,#e6e6e6 50%,#cfcfcf)"></div>
<div class="a" style="left:717px;top:806px;width:1px;height:7px;background:#666"></div><div class="a" style="left:719px;top:806px;width:1px;height:7px;background:#666"></div><div class="a" style="left:721px;top:806px;width:1px;height:7px;background:#666"></div>
<div class="a" style="left:266px;top:820px;width:1652px;height:1px;background:#6f8399"></div>
<div class="a" style="left:266px;top:821px;width:1652px;height:11px;background:#dce1e8"></div>
<div class="a" style="left:1072px;top:821px;width:40px;height:9px;background:#657c98"></div>
<div class="a" style="left:1088px;top:823px;width:0;height:0;border-left:4px solid transparent;border-right:4px solid transparent;border-top:4px solid #fff"></div>
<div class="a" style="left:269px;top:835px;width:72px;height:23px;border:1px solid #9fc4ea;border-bottom:none;background:#fff"></div>
<div class="t" style="left:280px;top:839px;color:#1d3f8c">基本设置</div>
<div class="a" style="left:341px;top:857px;width:1574px;height:1px;background:#9fc4ea"></div>
<div class="a" style="left:269px;top:858px;width:1px;height:175px;background:#9fc4ea"></div>
<div class="a" style="left:1914px;top:857px;width:1px;height:176px;background:#9fc4ea"></div>
<div class="lbl" style="left:279px;top:868px;">名称：</div>
<div class="inp" style="left:368px;top:864px;width:777px;height:23px"></div>
<div class="t" style="left:371px;top:868px;color:#000">1-在职研究生</div>
<div class="lbl" style="left:279px;top:896px;">预算类型：</div>
<div class="a" style="left:368px;top:892px;width:112px;height:24px;border:1px solid #a6a6a6;border-radius:3px;background:#f2f2f2"></div>
<div class="t" style="left:372px;top:897px;color:#777">自定义预算</div>
<div class="a" style="left:467px;top:902px;width:0;height:0;border-left:4px solid transparent;border-right:4px solid transparent;border-top:4px solid #b0b0b0"></div>
<div class="lbl" style="left:279px;top:926px;">预算金额：</div>
<div class="inp" style="left:368px;top:922px;width:149px;height:23px"></div>
<div class="t" style="left:372px;top:926px;color:#8a8a8a"><span style="font-size:10px">&lt;</span>不限定<span style="font-size:10px">&gt;</span></div>
<div class="lbl" style="left:279px;top:954px;">出价：</div>
<div class="inp" style="left:368px;top:949px;width:88px;height:23px"></div>
<div class="t" style="left:371px;top:953px;color:#000">1.00</div>
<div class="t" style="left:463px;top:956px;color:#555">元/点击</div>
<div class="a" style="left:506px;top:957px"><svg width="12" height="12" viewBox="0 0 12 12"><path d="M3 0.5 H9 L11.5 3 V9 L9 11.5 H3 L0.5 9 V3 Z" fill="#f7f08a" stroke="#1560c0" stroke-width="1.1"/><path d="M3.8 4.4 C3.8 2.6 8.2 2.6 8.2 4.4 C8.2 5.6 6 5.8 6 7.3" stroke="#1a1aff" stroke-width="1.2" fill="none"/><rect x="5.4" y="8.3" width="1.3" height="1.3" fill="#1a1aff"/></svg></div>
<div class="lbl" style="left:279px;top:980px;">点击监测链接：</div>
<div class="inp" style="left:368px;top:976px;width:762px;height:23px"></div>
<div class="a" style="left:1133px;top:981px"><svg width="12" height="12" viewBox="0 0 12 12"><path d="M3 0.5 H9 L11.5 3 V9 L9 11.5 H3 L0.5 9 V3 Z" fill="#f7f08a" stroke="#1560c0" stroke-width="1.1"/><path d="M3.8 4.4 C3.8 2.6 8.2 2.6 8.2 4.4 C8.2 5.6 6 5.8 6 7.3" stroke="#1a1aff" stroke-width="1.2" fill="none"/><rect x="5.4" y="8.3" width="1.3" height="1.3" fill="#1a1aff"/></svg></div>
<div class="a" style="left:1154px;top:864px;width:1px;height:169px;background:#c8c8c8"></div>
<div class="lbl" style="left:1163px;top:870px;">营销目标：</div>
<div class="sel" style="left:1229px;top:864px;width:124px;height:25px"><span style="line-height:23px">销售线索</span><i style="top:9px"></i></div>
<div class="lbl" style="left:1163px;top:897px;">线索营销场景：</div>
<div class="sel" style="left:1249px;top:893px;width:104px;height:25px"><span style="line-height:23px">通用</span><i style="top:9px"></i></div>
<div class="lbl" style="left:1163px;top:926px;">推广时段：</div>
<div class="val" style="left:1228px;top:926px;">全部</div>
<div class="lbl" style="left:1163px;top:952px;">推广地域：</div>
<div class="val" style="left:1228px;top:951px;">使用账户推广地域</div>
<div class="lbl" style="left:1163px;top:979px;">推广业务：</div>
<div class="val" style="left:1228px;top:978px;">学历教育</div>
<div class="a" style="left:1338px;top:927px"><svg width="12" height="12" viewBox="0 0 12 12"><path d="M3 0.5 H9 L11.5 3 V9 L9 11.5 H3 L0.5 9 V3 Z" fill="#f7f08a" stroke="#1560c0" stroke-width="1.1"/><path d="M3.8 4.4 C3.8 2.6 8.2 2.6 8.2 4.4 C8.2 5.6 6 5.8 6 7.3" stroke="#1a1aff" stroke-width="1.2" fill="none"/><rect x="5.4" y="8.3" width="1.3" height="1.3" fill="#1a1aff"/></svg></div>
<div class="a" style="left:1338px;top:952px"><svg width="12" height="12" viewBox="0 0 12 12"><path d="M3 0.5 H9 L11.5 3 V9 L9 11.5 H3 L0.5 9 V3 Z" fill="#f7f08a" stroke="#1560c0" stroke-width="1.1"/><path d="M3.8 4.4 C3.8 2.6 8.2 2.6 8.2 4.4 C8.2 5.6 6 5.8 6 7.3" stroke="#1a1aff" stroke-width="1.2" fill="none"/><rect x="5.4" y="8.3" width="1.3" height="1.3" fill="#1a1aff"/></svg></div>
<div class="a" style="left:1338px;top:980px"><svg width="12" height="12" viewBox="0 0 12 12"><path d="M3 0.5 H9 L11.5 3 V9 L9 11.5 H3 L0.5 9 V3 Z" fill="#f7f08a" stroke="#1560c0" stroke-width="1.1"/><path d="M3.8 4.4 C3.8 2.6 8.2 2.6 8.2 4.4 C8.2 5.6 6 5.8 6 7.3" stroke="#1a1aff" stroke-width="1.2" fill="none"/><rect x="5.4" y="8.3" width="1.3" height="1.3" fill="#1a1aff"/></svg></div>
<div class="lbl" style="left:1361px;top:868px;">关联产品库：</div>
<div class="val" style="left:1437px;top:867px;">未启用</div>
<div class="lbl" style="left:1373px;top:894px;">推广设备：</div>
<div class="sel" style="left:1430px;top:889px;width:108px;height:25px"><span style="line-height:23px">不限</span><i style="top:9px"></i></div>
<div class="lbl" style="left:1375px;top:926px;">出价方式：</div>
<div class="sel" style="left:1430px;top:920px;width:108px;height:25px"><span style="line-height:23px">点击</span><i style="top:9px"></i></div>
<div class="lbl" style="left:1375px;top:957px;">出价模式：</div>
<div class="sel" style="left:1430px;top:951px;width:108px;height:25px"><span style="line-height:23px">增强模式</span><i style="top:9px"></i></div>
<div class="lbl" style="left:1566px;top:868px;">转化管理方式：</div>
<div class="val" style="left:1653px;top:867px;">不限</div>
<div class="lbl" style="left:1566px;top:896px;">转化资产：</div>
<div class="val" style="left:1629px;top:895px;">-</div>
<div class="lbl" style="left:1566px;top:923px;">数据来源：</div>
<div class="val" style="left:1629px;top:922px;">-</div>
<div class="lbl" style="left:1566px;top:953px;">目标转化：</div>
<div class="val" style="left:1629px;top:952px;">留线索,电话拨通</div>
<div class="lbl" style="left:1746px;top:874px;">启用/暂停：</div>
<div class="sel" style="left:1827px;top:869px;width:75px;height:25px"><span style="line-height:23px">启用</span><i style="top:9px"></i></div>
<div class="lbl" style="left:1746px;top:907px;">状态：</div>
<div class="t" style="left:1843px;top:904px;font-weight:bold;color:#000">本地新增</div>
<div class="lbl" style="left:1746px;top:929px;">否定关键词：</div>
<div class="val" style="left:1823px;top:929px;">已设置(59;2)</div>
<div class="lbl" style="left:1746px;top:953px;">到达预算下线：</div>
<div class="t" style="left:1843px;top:952px;color:#b0b0b0">0 次</div>
</body></html>
